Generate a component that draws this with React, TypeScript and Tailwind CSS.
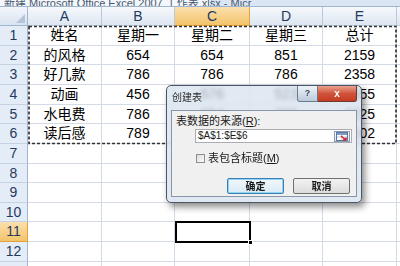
import React from 'react'

const colWidths = [74, 73, 75, 73, 74]
const rowHeights = [20, 19, 20, 20, 19, 20, 20, 19, 20, 19, 20, 20, 20]

const data: string[][] = [
  ['姓名', '星期一', '星期二', '星期三', '总计'],
  ['的风格', '654', '654', '851', '2159'],
  ['好几款', '786', '786', '786', '2358'],
  ['动画', '456', '576', '523', '1555'],
  ['水电费', '786', '654', '785', '2225'],
  ['读后感', '789', '456', '857', '2102'],
]

const letters = ['A', 'B', 'C', 'D', 'E']

const RangeIcon: React.FC = () => (
  <svg width="12" height="9" viewBox="0 0 12 9">
    <rect x="0.5" y="0.5" width="11" height="8" fill="#fff" stroke="#5a7aa6" />
    <rect x="1" y="1" width="10" height="2" fill="#7d9cc8" />
    <line x1="1" y1="5" x2="11" y2="5" stroke="#b8c8de" />
    <line x1="6" y1="3" x2="6" y2="8" stroke="#b8c8de" />
    <path d="M5 4 L10 8 M10 8 L7 8 M10 8 L10 5.5" stroke="#d8262b" strokeWidth="1.6" fill="none" />
  </svg>
)

export default function App() {
  return (
    <div
      className="relative w-[400px] h-[266px] overflow-hidden bg-white"
      style={{ fontFamily: '"Liberation Sans", "Noto Sans CJK SC", sans-serif' }}
    >
      {/* title strip, cut off */}
      <div className="flex h-[7px] overflow-hidden border-b border-[#9fb4cf] bg-[#dbe6f4]">
        <div className="flex w-[212px] items-end gap-[3px] rounded-br-[3px] border-r border-[#9fb4cf] bg-[#f4f7fb] pl-[1px]">
          <div className="h-[5px] w-[5px] bg-[#3d6fb4]" />
          <div className="-mb-[3px] whitespace-nowrap text-[11px] leading-[11px] text-[#4a5a6e]">
            新建 Microsoft Office Excel 2007 工作表.xlsx - Micr
          </div>
        </div>
        <div className="flex-1" />
      </div>

      {/* column header row */}
      <div className="flex h-[19px]">
        <div className="relative w-[28px] shrink-0 border-r border-b border-[#9eb6ce] bg-gradient-to-b from-[#f3f6fb] to-[#d9e3f0]">
          <div className="absolute right-[2px] bottom-[2px] h-0 w-0 border-l-[9px] border-t-[9px] border-l-transparent border-t-transparent border-r-[9px] border-r-[#b5c5da]" />
        </div>
        {letters.map((l, i) => (
          <div
            key={l}
            className={
              i === 2
                ? 'flex shrink-0 items-center justify-center border-r border-b border-[#e0a13e] bg-gradient-to-b from-[#fbe0ae] to-[#f3c468] text-[14px] text-[#1f3a5f]'
                : 'flex shrink-0 items-center justify-center border-r border-b border-[#b9c8da] bg-gradient-to-b from-[#f6f9fc] to-[#dde6f1] text-[14px] text-[#1f3a5f]'
            }
            style={{ width: colWidths[i] }}
          >
            {l}
          </div>
        ))}
        <div className="flex-1 border-b border-[#b9c8da] bg-gradient-to-b from-[#f6f9fc] to-[#dde6f1]" />
      </div>

      {/* rows */}
      {rowHeights.map((h, r) => (
        <div key={r} className="flex" style={{ height: h }}>
          <div
            className={
              r === 10
                ? 'flex w-[28px] shrink-0 items-center justify-center border-r border-b border-[#e0a13e] bg-gradient-to-b from-[#fbe0ae] to-[#f3c468] text-[14px] text-[#1f3a5f]'
                : 'flex w-[28px] shrink-0 items-center justify-center border-r border-b border-r-[#9eb6ce] border-b-[#c5d2e2] bg-[#e4ecf7] text-[14px] text-[#1f3a5f]'
            }
          >
            {r + 1}
          </div>
          {colWidths.map((w, c) => (
            <div
              key={c}
              className="flex shrink-0 items-center justify-center border-r border-b border-[#d4dbe7] text-[14px] text-black"
              style={{ width: w }}
            >
              {data[r]?.[c] ?? ''}
            </div>
          ))}
          <div className="flex-1 border-b border-[#d4dbe7]" />
        </div>
      ))}

      {/* copy marquee around A1:E6 */}
      <svg className="pointer-events-none absolute left-0 top-0" width="400" height="266">
        <rect
          x="29"
          y="26.5"
          width="367"
          height="117"
          fill="none"
          stroke="#333"
          strokeWidth="1.7"
          strokeDasharray="3 2"
        />
      </svg>

      {/* active cell C11 */}
      <div className="absolute left-[175px] top-[221px] h-[22px] w-[76px] border-2 border-black" />
      <div className="absolute left-[248px] top-[240px] h-[5px] w-[5px] border border-white bg-black" />

      {/* 创建表 dialog */}
      <div className="absolute left-[166px] top-[85px] flex h-[118px] w-[196px] flex-col rounded-[5px] border border-[#4b5563] bg-[#d7e2ee]/75 px-[4px] shadow-[3px_4px_7px_rgba(0,0,0,0.45)] backdrop-blur-[2px]">
        <div className="relative flex h-[23px] items-center pl-[1px]">
          <span className="text-[10px] text-[#2b2b2b]">创建表</span>
          <div className="absolute right-[0px] top-0 flex">
            <div className="flex h-[16px] w-[21px] items-center justify-center rounded-bl-[3px] border border-t-0 border-[#6b7a8c] bg-gradient-to-b from-[#eef3f8] to-[#bccadb] text-[9px] font-bold text-[#3a4a5e]">
              ?
            </div>
            <div className="flex h-[16px] w-[39px] items-center justify-center rounded-br-[3px] border border-t-0 border-l-0 border-[#6b3a32] bg-gradient-to-b from-[#e9a08f] via-[#d0533b] to-[#c43c22] text-[10px] font-bold text-white">
              x
            </div>
          </div>
        </div>
        <div className="mt-[1px] flex h-[87px] flex-col border border-[#8796a8] bg-[#f0f0f0] px-[4px]">
          <div className="mt-[4px] h-[12px] whitespace-nowrap text-[11px] leading-[12px] text-[#1a1a1a]">
            表数据的来源(<span className="underline">R</span>):
          </div>
          <div className="ml-[19px] mt-[2px] flex h-[14px] w-[157px] items-center justify-between border border-[#abadb3] bg-white pl-[2px] pr-[1px]">
            <span className="text-[10px] leading-[12px] text-[#1a1a1a]">$A$1:$E$6</span>
            <div className="flex h-[11px] w-[16px] items-center justify-center border border-[#8c9db3] bg-gradient-to-b from-[#fafcfe] to-[#dde6f0]">
              <RangeIcon />
            </div>
          </div>
          <div className="ml-[20px] mt-[10px] flex h-[10px] items-center gap-[3px]">
            <div className="h-[9px] w-[9px] border border-[#8f8f8f] bg-gradient-to-br from-[#dcdcdc] to-[#fbfbfb]" />
            <span className="whitespace-nowrap text-[11px] leading-[12px] text-[#1a1a1a]">
              表包含标题(<span className="underline">M</span>)
            </span>
          </div>
          <div className="ml-[51px] mt-[15px] flex gap-[9px]">
            <div className="flex h-[16px] w-[57px] items-center justify-center rounded-[2px] border border-[#3c7fb1] bg-gradient-to-b from-[#f2f8fc] to-[#d9ebf6] text-[10px] font-bold text-[#1a1a1a] shadow-[inset_0_0_0_1px_#8fd3f5]">
              确定
            </div>
            <div className="flex h-[16px] w-[57px] items-center justify-center rounded-[2px] border border-[#707070] bg-gradient-to-b from-[#f2f2f2] to-[#dcdcdc] text-[10px] font-bold text-[#1a1a1a]">
              取消
            </div>
          </div>
        </div>
      </div>
    </div>
  )
}
